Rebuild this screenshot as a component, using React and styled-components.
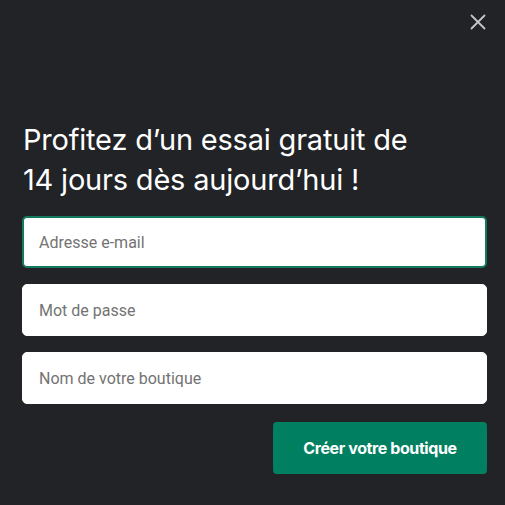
import React from "react";
import styled, { createGlobalStyle } from "styled-components";

const GlobalStyle = createGlobalStyle`
  html, body {
    margin: 0;
    padding: 0;
    background: #212326;
  }
  * { box-sizing: border-box; }
`;

const Modal = styled.div`
  width: 505px;
  height: 505px;
  background: #212326;
  font-family: Inter, "Noto Sans", sans-serif;
  display: flex;
  flex-direction: column;
  padding: 0 18px 0 22px;
  position: relative;
`;

const CloseBtn = styled.button`
  position: absolute;
  top: 13px;
  right: 18px;
  width: 18px;
  height: 18px;
  padding: 0;
  border: none;
  background: none;
  display: flex;
  align-items: center;
  justify-content: center;
  cursor: pointer;
`;

const Title = styled.h1`
  margin: 120px 0 16px 1px;
  color: #ffffff;
  font-size: 29px;
  font-weight: 400;
  line-height: 40px;
  letter-spacing: -0.2px;
`;

const Form = styled.form`
  display: flex;
  flex-direction: column;
  gap: 16px;
`;

const Field = styled.input`
  height: 52px;
  width: 100%;
  border-radius: 5px;
  border: ${(p) => (p.$focused ? "2px solid #137a5e" : "1px solid #ffffff")};
  background: #ffffff;
  padding: 0 ${(p) => (p.$focused ? "15px" : "16px")};
  font-family: Roboto, "Noto Sans", sans-serif;
  font-size: 16px;
  color: #202223;
  outline: none;
  &::placeholder { color: #737373; }
`;

const Actions = styled.div`
  display: flex;
  justify-content: flex-end;
  margin-top: 2px;
`;

const Submit = styled.button`
  width: 214px;
  height: 52px;
  border: none;
  border-radius: 4px;
  background: #008060;
  color: #ffffff;
  font-family: Inter, "Noto Sans", sans-serif;
  font-size: 16px;
  font-weight: 700;
  letter-spacing: -0.4px;
  cursor: pointer;
`;

export default function App() {
  return (
    <>
      <GlobalStyle />
      <Modal>
        <CloseBtn aria-label="Fermer">
          <svg width="16" height="16" viewBox="0 0 16 16">
            <path d="M1.5 1.5 L14.5 14.5 M14.5 1.5 L1.5 14.5" stroke="#c4c6c8" strokeWidth="1.8" strokeLinecap="round" />
          </svg>
        </CloseBtn>
        <Title>
          Profitez d’un essai gratuit de
          <br />
          14 jours dès aujourd’hui !
        </Title>
        <Form onSubmit={(e) => e.preventDefault()}>
          <Field $focused type="email" placeholder="Adresse e-mail" />
          <Field type="password" placeholder="Mot de passe" />
          <Field type="text" placeholder="Nom de votre boutique" />
          <Actions>
            <Submit type="submit">Créer votre boutique</Submit>
          </Actions>
        </Form>
      </Modal>
    </>
  );
}
